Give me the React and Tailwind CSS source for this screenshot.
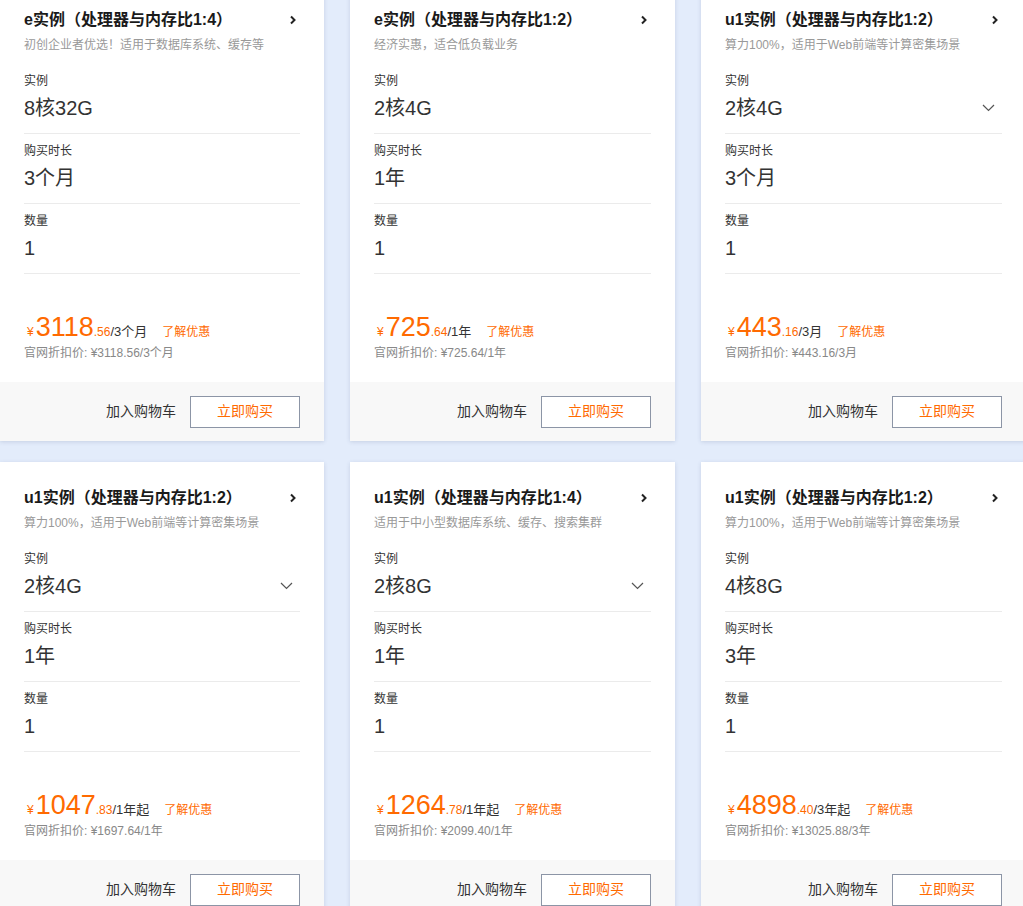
const cards = [
  {
    title: 'e实例（处理器与内存比1:4）',
    desc: '初创企业者优选！适用于数据库系统、缓存等',
    spec: '8核32G',
    pick: false,
    term: '3个月',
    price: '3118',
    cents: '.56',
    unit: '/3个月',
    list: '¥3118.56/3个月',
  },
  {
    title: 'e实例（处理器与内存比1:2）',
    desc: '经济实惠，适合低负载业务',
    spec: '2核4G',
    pick: false,
    term: '1年',
    price: '725',
    cents: '.64',
    unit: '/1年',
    list: '¥725.64/1年',
  },
  {
    title: 'u1实例（处理器与内存比1:2）',
    desc: '算力100%，适用于Web前端等计算密集场景',
    spec: '2核4G',
    pick: true,
    term: '3个月',
    price: '443',
    cents: '.16',
    unit: '/3月',
    list: '¥443.16/3月',
  },
  {
    title: 'u1实例（处理器与内存比1:2）',
    desc: '算力100%，适用于Web前端等计算密集场景',
    spec: '2核4G',
    pick: true,
    term: '1年',
    price: '1047',
    cents: '.83',
    unit: '/1年起',
    list: '¥1697.64/1年',
  },
  {
    title: 'u1实例（处理器与内存比1:4）',
    desc: '适用于中小型数据库系统、缓存、搜索集群',
    spec: '2核8G',
    pick: true,
    term: '1年',
    price: '1264',
    cents: '.78',
    unit: '/1年起',
    list: '¥2099.40/1年',
  },
  {
    title: 'u1实例（处理器与内存比1:2）',
    desc: '算力100%，适用于Web前端等计算密集场景',
    spec: '4核8G',
    pick: false,
    term: '3年',
    price: '4898',
    cents: '.40',
    unit: '/3年起',
    list: '¥13025.88/3年',
  },
];

const Arrow = () => (
  <svg width="8" height="12" viewBox="0 0 8 12" className="shrink-0">
    <path d="M2 2.5 L5.5 6 L2 9.5" fill="none" stroke="#222" strokeWidth="2" />
  </svg>
);

const Down = () => (
  <svg width="13" height="8" viewBox="0 0 13 8" className="shrink-0">
    <path d="M1 1 L6.5 6.5 L12 1" fill="none" stroke="#555" strokeWidth="1.2" />
  </svg>
);

const Field = ({ label, value, pick }) => (
  <div className="pt-[7px] pb-[11px] border-b border-[#ebebeb]">
    <div className="text-[12px] leading-5 text-[#333]">{label}</div>
    <div className="mt-[3px] flex items-center justify-between pr-[7px]">
      <span className="text-[20px] leading-[28px] text-[#333]">{value}</span>
      {pick && <Down />}
    </div>
  </div>
);

const Card = ({ c }) => (
  <div className="h-[457px] flex flex-col bg-white shadow-[0_1px_4px_rgba(60,80,120,0.18)]">
    <div className="px-6 pt-[24px]">
      <div className="flex items-center justify-between pr-[3px]">
        <span className="text-[16px] leading-6 font-bold text-[#1a1a1a]">{c.title}</span>
        <Arrow />
      </div>
      <div className="mt-[3px] text-[12px] leading-5 text-[#999]">{c.desc}</div>
      <div className="mt-[9px]">
        <Field label="实例" value={c.spec} pick={c.pick} />
        <Field label="购买时长" value={c.term} />
        <Field label="数量" value="1" />
      </div>
      <div className="mt-[36px] flex items-baseline leading-[34px] whitespace-nowrap">
        <span className="text-[12px] text-[#ff6a00] mr-[2px] ml-[3px]">¥</span>
        <span className="text-[27px] text-[#ff6a00]">{c.price}</span>
        <span className="text-[12px] text-[#ff6a00]">{c.cents}</span>
        <span className="text-[13px] text-[#333]">{c.unit}</span>
        <span className="ml-[15px] text-[12px] text-[#ff6a00]">了解优惠</span>
      </div>
      <div className="-mt-[2px] text-[12px] leading-[12px] text-[#888]">官网折扣价: {c.list}</div>
    </div>
    <div className="mt-auto h-[59px] bg-[#f8f8f8] flex items-center justify-end gap-[14px] px-6">
      <span className="text-[14px] text-[#333]">加入购物车</span>
      <button className="w-[110px] h-[32px] border border-[#8c95a6] bg-white text-[14px] text-[#ff6a00]">
        立即购买
      </button>
    </div>
  </div>
);

export default function App() {
  return (
    <div
      className="h-[906px] overflow-hidden bg-[#e3ecfb]"
      style={{ fontFamily: '"Liberation Sans", Arial, "Noto Sans CJK SC", sans-serif' }}
    >
      <div className="-mt-4 grid grid-cols-[324px_325px_325px] gap-x-[26px] gap-y-[21px]">
        {cards.map((c, i) => (
          <Card key={i} c={c} />
        ))}
      </div>
    </div>
  );
}
